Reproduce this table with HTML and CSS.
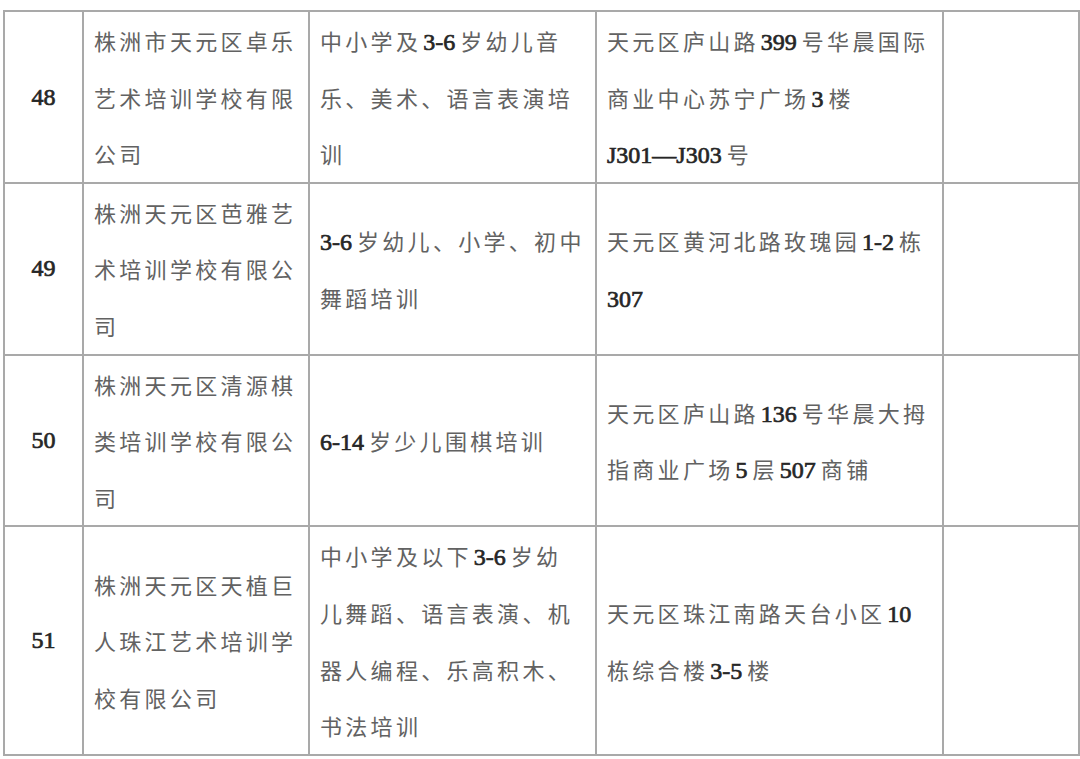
FILE: index.html
```html
<!DOCTYPE html>
<html lang="zh-CN">
<head>
<meta charset="utf-8">
<title>培训学校名单</title>
<link rel="stylesheet" href="styles.css">
</head>
<body>
<div class="page">
<table class="list">
  <colgroup>
    <col class="c-no"><col class="c-name"><col class="c-scope"><col class="c-addr"><col class="c-note">
  </colgroup>
  <tbody>
    <tr>
      <td class="no">48</td>
      <td class="txt">株洲市天元区卓乐<br>艺术培训学校有限<br>公司</td>
      <td class="txt">中小学及<span class="num">3-6</span>岁幼儿音<br>乐、美术、语言表演培<br>训</td>
      <td class="txt">天元区庐山路<span class="num">399</span>号华晨国际<br>商业中心苏宁广场<span class="num">3</span>楼<br><span class="num first">J301—J303</span>号</td>
      <td></td>
    </tr>
    <tr>
      <td class="no">49</td>
      <td class="txt">株洲天元区芭雅艺<br>术培训学校有限公<br>司</td>
      <td class="txt"><span class="num first">3-6</span>岁幼儿、小学、初中<br>舞蹈培训</td>
      <td class="txt">天元区黄河北路玫瑰园<span class="num">1-2</span>栋<br><span class="num first">307</span></td>
      <td></td>
    </tr>
    <tr>
      <td class="no">50</td>
      <td class="txt">株洲天元区清源棋<br>类培训学校有限公<br>司</td>
      <td class="txt"><span class="num first">6-14</span>岁少儿围棋培训</td>
      <td class="txt">天元区庐山路<span class="num">136</span>号华晨大拇<br>指商业广场<span class="num">5</span>层<span class="num">507</span>商铺</td>
      <td></td>
    </tr>
    <tr>
      <td class="no">51</td>
      <td class="txt">株洲天元区天植巨<br>人珠江艺术培训学<br>校有限公司</td>
      <td class="txt">中小学及以下<span class="num">3-6</span>岁幼<br>儿舞蹈、语言表演、机<br>器人编程、乐高积木、<br>书法培训</td>
      <td class="txt">天元区珠江南路天台小区<span class="num">10</span><br>栋综合楼<span class="num">3-5</span>楼</td>
      <td></td>
    </tr>
  </tbody>
</table>
</div>
</body>
</html>
```

FILE: styles.css
```css
html, body {
  margin: 0;
  padding: 0;
  background: #ffffff;
}

.page {
  padding: 10px 0 0 3px;
}

.list {
  border-collapse: collapse;
  table-layout: fixed;
  width: 1075px;
}

.c-no { width: 79px; }
.c-name { width: 226px; }
.c-scope { width: 287px; }
.c-addr { width: 347px; }
.c-note { width: 136px; }

.list td {
  border: 2px solid #a9a9a9;
  padding: 0;
  vertical-align: middle;
}

.list .no {
  text-align: center;
  font-family: "Liberation Serif", "Times New Roman", serif;
  font-weight: normal;
  font-size: 24px;
  color: #262626;
  line-height: 56.6px;
  -webkit-text-stroke: 0.7px #262626;
}

.list .txt {
  padding-left: 10px;
  font-family: "Noto Sans CJK SC", "Noto Sans", sans-serif;
  font-weight: 400;
  font-size: 22px;
  letter-spacing: 3.3px;
  line-height: 56.6px;
  color: #626262;
  white-space: nowrap;
}

.num {
  font-family: "Liberation Serif", "Times New Roman", serif;
  font-weight: normal;
  font-size: 24px;
  line-height: 1;
  letter-spacing: 0;
  color: #262626;
  -webkit-text-stroke: 0.7px #262626;
  margin: 0 5px 0 2px;
}

.num.first {
  margin-left: 0;
}
```
